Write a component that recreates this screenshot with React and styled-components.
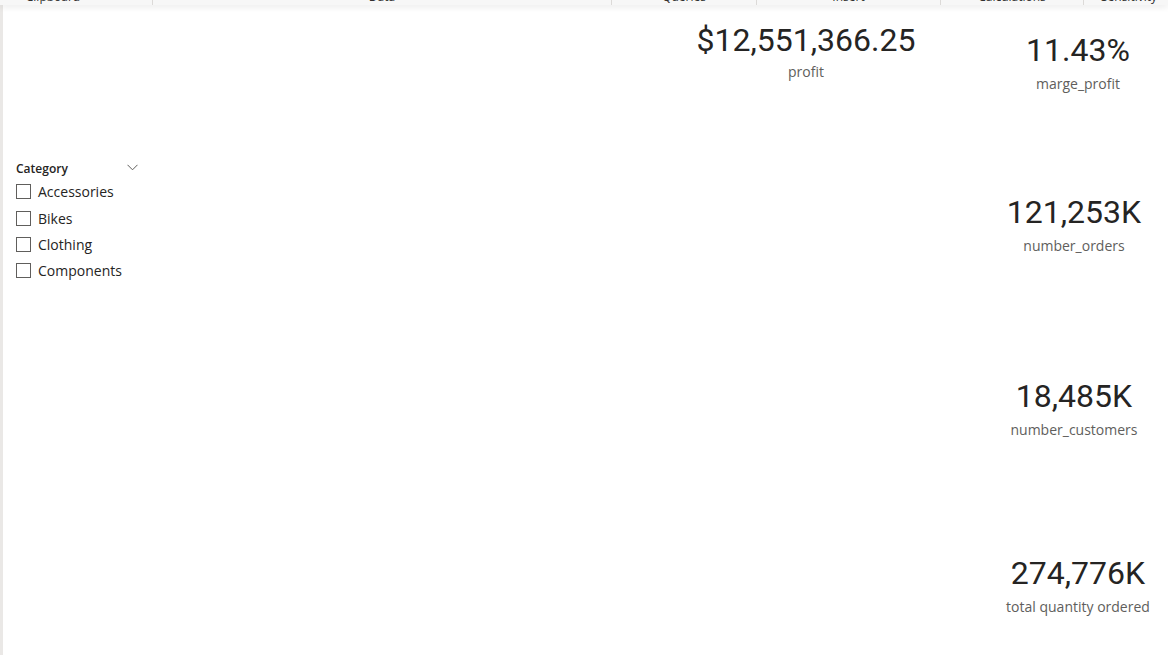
import React from 'react';
import styled, { createGlobalStyle } from 'styled-components';

const GlobalStyle = createGlobalStyle`
  html, body {
    margin: 0;
    padding: 0;
    height: 655px;
    overflow: hidden;
    background: #ffffff;
    font-family: "Open Sans", "Noto Sans", sans-serif;
  }
  #root {
    height: 655px;
  }
`;

const Page = styled.div`
  display: flex;
  flex-direction: column;
  height: 655px;
  background: #ffffff;
`;

const Ribbon = styled.div`
  position: relative;
  z-index: 2;
  display: flex;
  height: 5px;
  overflow: hidden;
  background: #f7f7f7;
  box-shadow: 0 2px 6px rgba(0, 0, 0, 0.09);
`;

const RibbonGroup = styled.div`
  flex: none;
  display: flex;
  justify-content: center;
  width: ${props => props.width}px;
  padding-right: ${props => props.pad || 0}px;
  box-sizing: border-box;
  height: 14px;
  margin-top: -9px;
  border-right: ${props => (props.last ? 'none' : '1px solid #dcdad8')};
  font-size: 12px;
  line-height: 12px;
  color: #323130;
  white-space: nowrap;
`;

const Body = styled.div`
  flex: 1;
  display: flex;
  min-height: 0;
`;

const LeftStrip = styled.div`
  width: 3px;
  background: #eae8e6;
`;

const Canvas = styled.div`
  flex: 1;
  display: flex;
  align-items: flex-start;
  padding-left: 13px;
`;

const Slicer = styled.div`
  width: 125px;
  margin-top: 155.5px;
`;

const SlicerHeader = styled.div`
  display: flex;
  align-items: center;
  justify-content: space-between;
  height: 16px;
  margin-bottom: 2px;
  font-size: 12px;
  line-height: 16px;
  font-weight: 600;
  color: #252423;
`;

const Chevron = styled.svg`
  width: 11px;
  height: 7px;
  margin-right: 3px;
  margin-top: -2px;
`;

const SlicerItem = styled.label`
  display: flex;
  align-items: center;
  height: 26.4px;
  font-size: 14px;
  color: #252423;
`;

const Box = styled.span`
  width: 13px;
  height: 13px;
  border: 1px solid #605e5c;
  margin-right: 7px;
  flex: none;
`;

const Spacer = styled.div`
  flex: 1;
`;

const Card = styled.div`
  display: flex;
  flex-direction: column;
  align-items: center;
  width: ${props => props.width || 194}px;
  margin-top: ${props => props.top}px;
  margin-right: ${props => props.right || 0}px;
  padding-left: ${props => props.shift || 0}px;
  box-sizing: border-box;
`;

const Value = styled.div`
  font-family: Roboto, "DejaVu Sans", sans-serif;
  font-size: 32px;
  line-height: 32px;
  color: #252423;
  white-space: nowrap;
`;

const Label = styled.div`
  margin-top: ${props => props.gap || 8}px;
  font-size: 14px;
  line-height: 20px;
  color: #605e5c;
  white-space: nowrap;
`;

const RightColumn = styled.div`
  display: flex;
  flex-direction: column;
  width: 194px;
`;

const ribbonGroups = [
  { name: 'Clipboard', width: 153, pad: 46 },
  { name: 'Data', width: 459 },
  { name: 'Queries', width: 145 },
  { name: 'Insert', width: 184 },
  { name: 'Calculations', width: 143 },
  { name: 'Sensitivity', width: 90, last: true },
];

const categories = ['Accessories', 'Bikes', 'Clothing', 'Components'];

const rightCards = [
  { value: '11.43%', label: 'marge_profit', top: 29, shift: 14 },
  { value: '121,253K', label: 'number_orders', top: 102, shift: 6 },
  { value: '18,485K', label: 'number_customers', top: 124, shift: 6 },
  { value: '274,776K', label: 'total quantity ordered', top: 117, shift: 14 },
];

export default function App() {
  return (
    <Page>
      <GlobalStyle />
      <Ribbon>
        {ribbonGroups.map(g => (
          <RibbonGroup key={g.name} width={g.width} pad={g.pad} last={g.last}>
            {g.name}
          </RibbonGroup>
        ))}
      </Ribbon>
      <Body>
        <LeftStrip />
        <Canvas>
          <Slicer>
            <SlicerHeader>
              Category
              <Chevron viewBox="0 0 11 7">
                <path d="M0.5 0.8 L5.5 5.8 L10.5 0.8" fill="none" stroke="#605e5c" strokeWidth="1" />
              </Chevron>
            </SlicerHeader>
            {categories.map(c => (
              <SlicerItem key={c}>
                <Box />
                {c}
              </SlicerItem>
            ))}
          </Slicer>
          <Spacer />
          <Card width={260} top={18.5} right={38}>
            <Value>$12,551,366.25</Value>
            <Label gap={6}>profit</Label>
          </Card>
          <RightColumn>
            {rightCards.map(c => (
              <Card key={c.label} top={c.top} shift={c.shift}>
                <Value>{c.value}</Value>
                <Label>{c.label}</Label>
              </Card>
            ))}
          </RightColumn>
        </Canvas>
      </Body>
    </Page>
  );
}
